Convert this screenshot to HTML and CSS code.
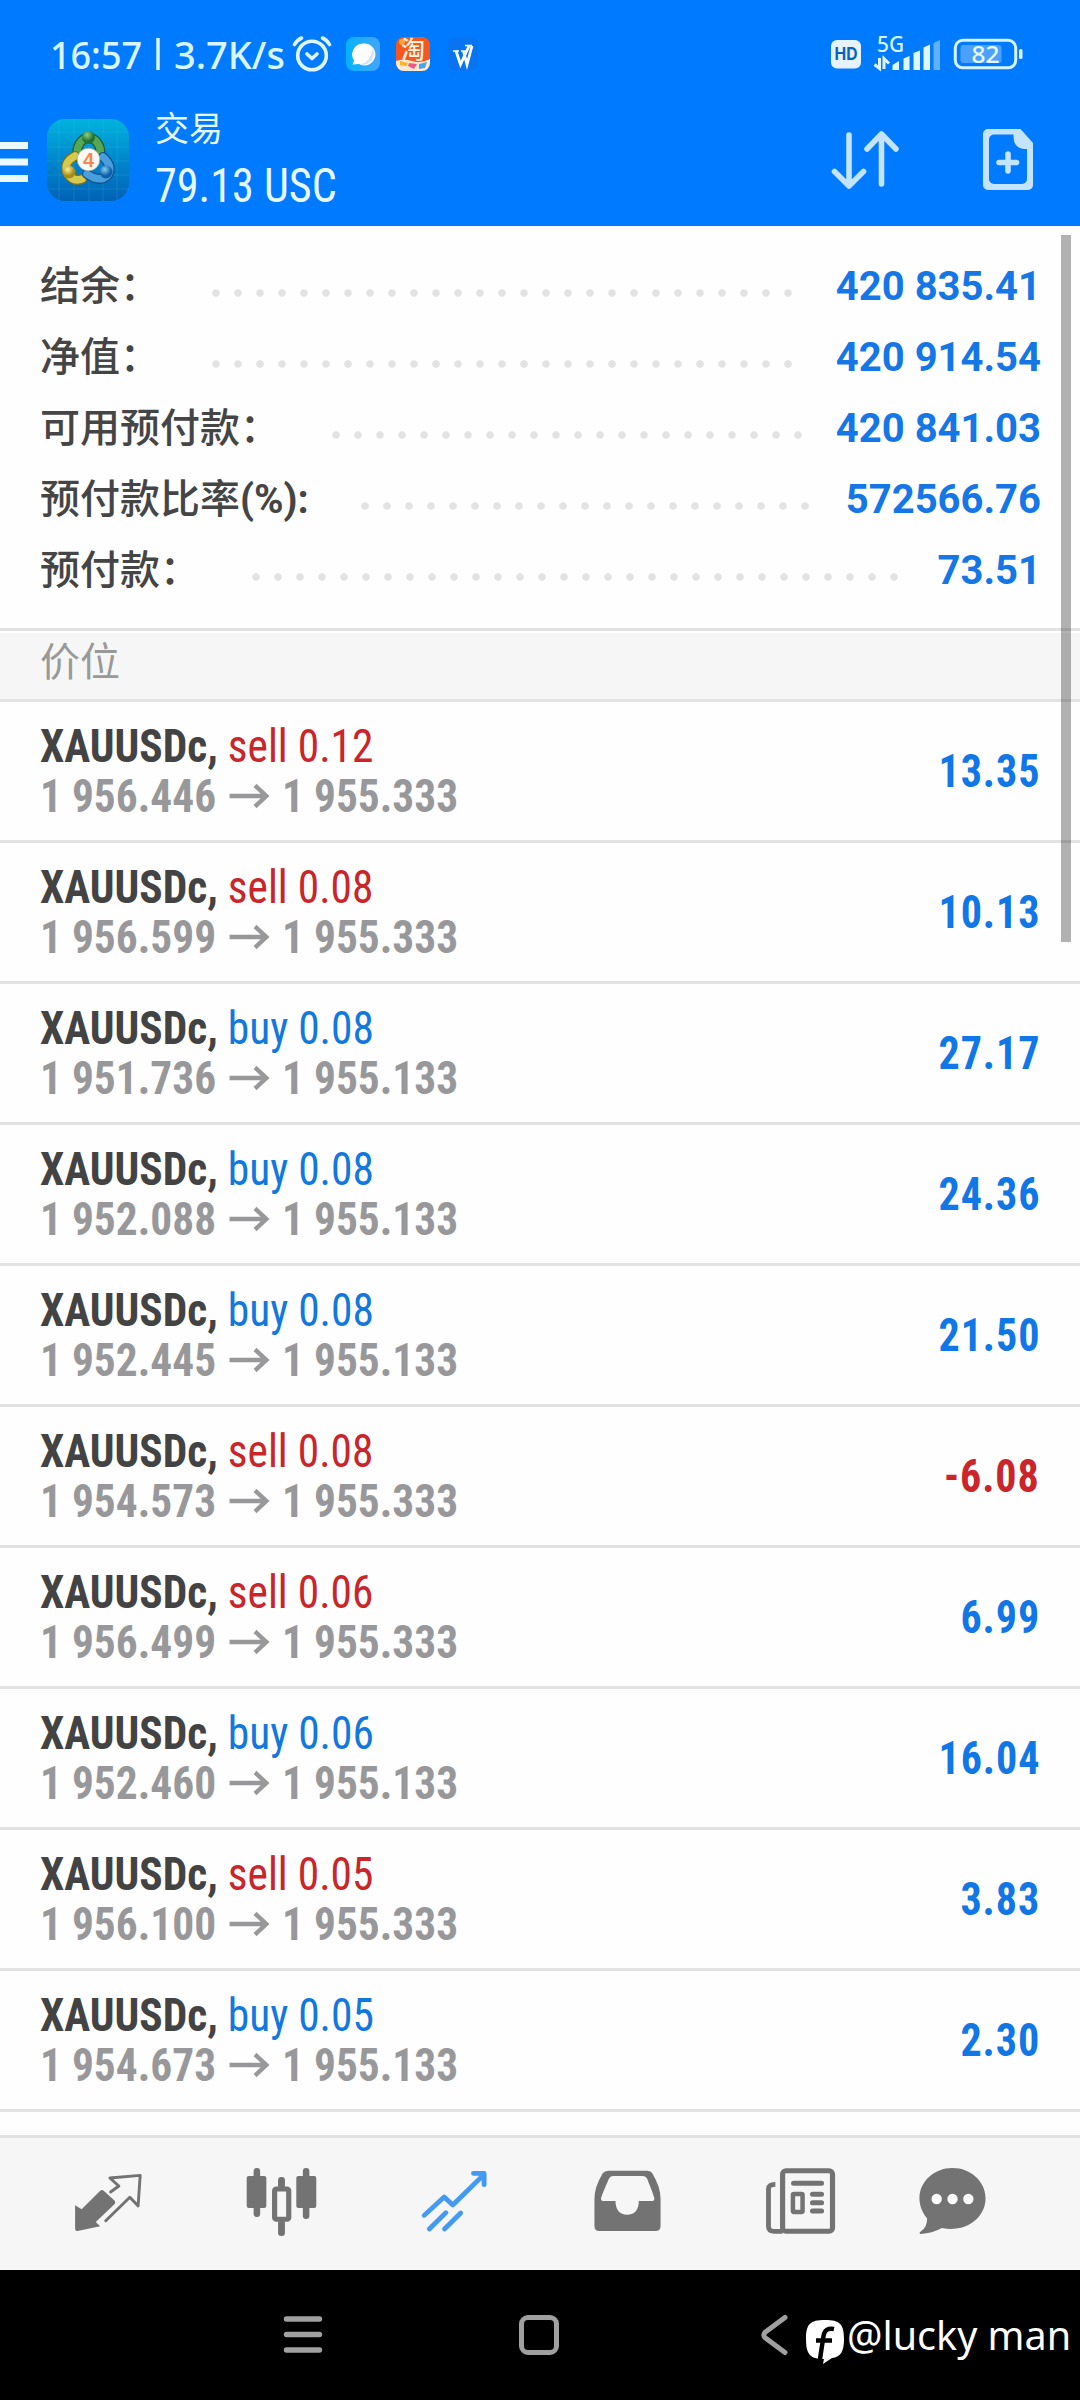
FILE: index.html
```html
<!DOCTYPE html>
<html lang="zh-CN">
<head>
<meta charset="utf-8">
<title>交易</title>
<link rel="stylesheet" href="styles.css">
</head>
<body>
<div class="phone">
  <header class="top">
    <div class="status">
      <svg class="clock" viewBox="50 34 242 40"><text x="50" y="68.500" textLength="92" lengthAdjust="spacingAndGlyphs">16:57</text><path d="M158 38v32" stroke="#d9f5ff" stroke-width="3.500"/><text x="174" y="68.500" textLength="111" lengthAdjust="spacingAndGlyphs">3.7K/s</text></svg>
      <svg class="alarm" viewBox="0 0 40 36"><g fill="none" stroke="#e0f6ff" stroke-width="3.600" stroke-linecap="round" stroke-linejoin="round"><circle cx="20" cy="19.500" r="14.300"/><path d="M2.500 8.500Q5 4 9.500 2M37.500 8.500Q35 4 30.500 2M15 18l5 4.500 5-4.500"/></g></svg>
      <svg class="app app-chat" viewBox="0 0 34 34"><defs><linearGradient id="c" x2="1"><stop stop-color="#03b3f8"/><stop offset="1" stop-color="#43a5ff"/></linearGradient></defs><rect width="34" height="34" rx="8" fill="url(#c)"/><path d="M17 6.500a11 11 0 1 1-4 20.500l-6.500.5 1.500-4A11 11 0 0 1 17 6.500z" fill="#fff"/><path d="M26 11a11 11 0 0 1-12 16.500Q26 24 26 11z" fill="#cfe6fb"/></svg>
      <svg class="app app-shop" viewBox="0 0 34 34"><rect width="34" height="34" rx="8" fill="#f6571f"/><path d="M0 24q8-3 16 0t18-2v4a8 8 0 0 1-8 8H8a8 8 0 0 1-8-8z" fill="#ffe9d0"/><path d="M4 24l8 2-2 3-6-1z" fill="#ffb224"/><path d="M13 26l8 1-3 5-6-3z" fill="#ed5688"/><path d="M23 27l8-2-2 6-6 1z" fill="#46a7ef"/><circle cx="6" cy="5" r="3" fill="#ffa52c"/><text x="17" y="21" text-anchor="middle" class="shop-text">淘</text></svg>
      <svg class="app app-w" viewBox="0 0 34 34"><rect width="30" height="34" rx="7" x="2" fill="#0874f2"/><path d="M7 14h6M15 14h6M19 8.500h7" stroke="#fff" stroke-width="1.500"/><path d="M10 14l4.500 13.500L23 9M17.500 14L21 27.500 26 9" fill="none" stroke="#fff" stroke-width="2.800"/></svg>
      <svg class="system" viewBox="828 34 198 40">
        <rect x="831" y="40" width="30" height="28.500" rx="6" fill="#e6f3ff"/>
        <text x="834.500" y="60" class="hd" textLength="23" lengthAdjust="spacingAndGlyphs">HD</text>
        <text x="877" y="52" class="gen" textLength="27" lengthAdjust="spacingAndGlyphs">5G</text>
        <path d="M879.500 58v10.500l-5-4M884 69V58.500l5 5" fill="none" stroke="#e0f6ff" stroke-width="3"/>
        <path d="M892.500 70v-5l6.500-4v9zM903.500 70V58.500l6-2.500v14zM913.500 70V53l6.500-2.500V70zM923.500 70V47.500l6.500-3V70z" fill="#e0f6ff"/>
        <path d="M933.500 70V43l6.500-3v30z" fill="#62b0ff"/>
        <rect x="955.300" y="40.300" width="60.400" height="27.500" rx="7.500" fill="none" stroke="#d8f3ff" stroke-width="3"/>
        <rect x="960.500" y="45" width="41" height="18" rx="3" fill="#4ba1ff"/>
        <rect x="1019" y="49" width="3.500" height="10" rx="1.500" fill="#d8f3ff"/>
        <text x="971.500" y="63" class="batt" textLength="28" lengthAdjust="spacingAndGlyphs">82</text>
      </svg>
    </div>
    <div class="bar">
      <svg class="burger" viewBox="0 0 28 40"><path d="M0 0h28v7H0zM0 16.500h28v7H0zM0 33h28v7H0z" fill="#eaf9ff"/></svg>
      <svg class="logo" viewBox="0 0 82 82">
        <defs>
          <linearGradient id="bg" x2="0" y2="1"><stop stop-color="#00b4dd"/><stop offset=".5" stop-color="#0087cd"/><stop offset="1" stop-color="#0062b5"/></linearGradient>
          <radialGradient id="gr" cx=".4" cy=".3"><stop stop-color="#8fd07c"/><stop offset="1" stop-color="#1e7233"/></radialGradient>
          <radialGradient id="ye" cx=".4" cy=".3"><stop stop-color="#fff09a"/><stop offset="1" stop-color="#a78c14"/></radialGradient>
          <radialGradient id="bl" cx=".4" cy=".3"><stop stop-color="#86cbf5"/><stop offset="1" stop-color="#0c5fa8"/></radialGradient>
        </defs>
        <rect width="82" height="82" rx="18" fill="url(#bg)"/>
        <path d="M12 0v82M27 0v82M42 0v82M56 0v82M70 0v82M0 13h82M0 28h82M0 42h82M0 56h82M0 70h82" stroke="#48bfe6" stroke-opacity=".2" fill="none"/>
        <g fill="none" stroke-linecap="round">
          <path d="M31 38a11.500 14 0 1 1 22-2" stroke="#1d5b35" stroke-width="10"/><path d="M31 38a11.500 14 0 1 1 22-2" stroke="#55a754" stroke-width="7.500"/>
          <path d="M28 37q-13 7-7 18 5 8 14 5" stroke="#7b701d" stroke-width="10"/><path d="M28 37q-13 7-7 18 5 8 14 5" stroke="#d6ca4d" stroke-width="7.500"/>
          <path d="M56 38q10 9 5 18-8 8-21-1" stroke="#124f8d" stroke-width="10"/><path d="M56 38q10 9 5 18-8 8-21-1" stroke="#489fdd" stroke-width="7.500"/>
        </g>
        <circle cx="41.500" cy="18.500" r="6.500" fill="url(#gr)"/><circle cx="22" cy="53" r="6.500" fill="url(#ye)"/><circle cx="59" cy="53" r="6.500" fill="url(#bl)"/>
        <circle cx="41.500" cy="40.500" r="11.300" fill="#fbf8f3" stroke="#a5a399" stroke-width=".7"/>
        <text x="41.500" y="47.500" text-anchor="middle" class="four">4</text>
      </svg>
      <div class="titles"><div class="title">交易</div><div class="profit">79.13 USC</div></div>
      <svg class="sort" viewBox="0 0 68 60"><path d="M18 5v51M3.500 41.500L18 56l14.500-14.500M50.500 54V4M36 19L50.500 4 65 19" fill="none" stroke="#c3e3ff" stroke-width="5.600" stroke-linecap="round" stroke-linejoin="round"/></svg>
      <svg class="new" viewBox="0 0 50 61"><path fill-rule="evenodd" d="M5 0h32.500L50 14v42a5 5 0 0 1-5 5H5a5 5 0 0 1-5-5V5a5 5 0 0 1 5-5zm6 5.500a5 5 0 0 0-5 5V50a5 5 0 0 0 5 5h28a5 5 0 0 0 5-5V20h-3Q30 19 30.500 5.500z" fill="#c3e3ff"/><path d="M25 25v17M16 33.500h17.500" stroke="#c3e3ff" stroke-width="5.600" stroke-linecap="round"/></svg>
    </div>
  </header>

  <main class="content">
    <section class="summary">
      <div class="sum"><span class="key">结余：</span><span class="lead"><i></i></span><span class="val">420 835.41</span></div>
      <div class="sum"><span class="key">净值：</span><span class="lead"><i></i></span><span class="val">420 914.54</span></div>
      <div class="sum"><span class="key">可用预付款：</span><span class="lead"><i></i></span><span class="val">420 841.03</span></div>
      <div class="sum"><span class="key">预付款比率<b>(%):</b></span><span class="lead"><i></i></span><span class="val">572566.76</span></div>
      <div class="sum"><span class="key">预付款：</span><span class="lead"><i></i></span><span class="val">73.51</span></div>
    </section>
    <h2 class="section">价位</h2>
    <section class="orders">
      <div class="order"><div class="deal"><p><b>XAUUSDc,</b> <span class="sell">sell 0.12</span></p><p class="px">1 956.446<svg class="to" viewBox="0 0 42 24"><path d="M0 12h39M27 1.500L39 12 27 22.500"/></svg>1 955.333</p></div><span class="pl">13.35</span></div>
      <div class="order"><div class="deal"><p><b>XAUUSDc,</b> <span class="sell">sell 0.08</span></p><p class="px">1 956.599<svg class="to" viewBox="0 0 42 24"><path d="M0 12h39M27 1.500L39 12 27 22.500"/></svg>1 955.333</p></div><span class="pl">10.13</span></div>
      <div class="order"><div class="deal"><p><b>XAUUSDc,</b> <span class="buy">buy 0.08</span></p><p class="px">1 951.736<svg class="to" viewBox="0 0 42 24"><path d="M0 12h39M27 1.500L39 12 27 22.500"/></svg>1 955.133</p></div><span class="pl">27.17</span></div>
      <div class="order"><div class="deal"><p><b>XAUUSDc,</b> <span class="buy">buy 0.08</span></p><p class="px">1 952.088<svg class="to" viewBox="0 0 42 24"><path d="M0 12h39M27 1.500L39 12 27 22.500"/></svg>1 955.133</p></div><span class="pl">24.36</span></div>
      <div class="order"><div class="deal"><p><b>XAUUSDc,</b> <span class="buy">buy 0.08</span></p><p class="px">1 952.445<svg class="to" viewBox="0 0 42 24"><path d="M0 12h39M27 1.500L39 12 27 22.500"/></svg>1 955.133</p></div><span class="pl">21.50</span></div>
      <div class="order"><div class="deal"><p><b>XAUUSDc,</b> <span class="sell">sell 0.08</span></p><p class="px">1 954.573<svg class="to" viewBox="0 0 42 24"><path d="M0 12h39M27 1.500L39 12 27 22.500"/></svg>1 955.333</p></div><span class="pl loss">-6.08</span></div>
      <div class="order"><div class="deal"><p><b>XAUUSDc,</b> <span class="sell">sell 0.06</span></p><p class="px">1 956.499<svg class="to" viewBox="0 0 42 24"><path d="M0 12h39M27 1.500L39 12 27 22.500"/></svg>1 955.333</p></div><span class="pl">6.99</span></div>
      <div class="order"><div class="deal"><p><b>XAUUSDc,</b> <span class="buy">buy 0.06</span></p><p class="px">1 952.460<svg class="to" viewBox="0 0 42 24"><path d="M0 12h39M27 1.500L39 12 27 22.500"/></svg>1 955.133</p></div><span class="pl">16.04</span></div>
      <div class="order"><div class="deal"><p><b>XAUUSDc,</b> <span class="sell">sell 0.05</span></p><p class="px">1 956.100<svg class="to" viewBox="0 0 42 24"><path d="M0 12h39M27 1.500L39 12 27 22.500"/></svg>1 955.333</p></div><span class="pl">3.83</span></div>
      <div class="order"><div class="deal"><p><b>XAUUSDc,</b> <span class="buy">buy 0.05</span></p><p class="px">1 954.673<svg class="to" viewBox="0 0 42 24"><path d="M0 12h39M27 1.500L39 12 27 22.500"/></svg>1 955.133</p></div><span class="pl">2.30</span></div>
    </section>
    <div class="scrollbar"></div>
  </main>

  <nav class="tabs">
    <svg viewBox="210 255 212 225" preserveAspectRatio="none"><path d="M219 376l19 12 54-56q5-4 10 0l32 30q3 5 0 10l-55 54 13 13-66 14q-7 1-7-7z" fill="#737373"/><path d="M308 422l70-70 24 26 6-92-88 8 26 24-24 18" fill="none" stroke="#737373" stroke-width="8.500" stroke-linejoin="round" stroke-linecap="round"/></svg>
    <svg viewBox="710 255 212 225" preserveAspectRatio="none"><g fill="#737373"><rect x="715" y="288" width="57" height="96" rx="6"/><rect x="859" y="288" width="58" height="96" rx="6"/><rect x="735" y="264" width="19" height="147" rx="9"/><rect x="878" y="264" width="19" height="153" rx="9"/><rect x="806" y="291" width="20" height="35" rx="9"/><rect x="806" y="420" width="20" height="48" rx="9"/></g><rect x="796" y="327" width="41" height="91" rx="5" fill="none" stroke="#737373" stroke-width="15"/></svg>
    <svg viewBox="1213 255 212 225" preserveAspectRatio="none"><path d="M1231 406l58-55 25 24 91-92M1246 447l48-49M1290 447l47-48M1374 280h31v34" fill="none" stroke="#4499f0" stroke-width="14" stroke-linecap="round" stroke-linejoin="round"/><path d="M1385 282l20 20v-20z" fill="#4499f0"/></svg>
    <svg viewBox="148 255 212 225" preserveAspectRatio="none"><path fill-rule="evenodd" d="M198 272h114q10 0 14 8 24 42 24 76v83q0 14-14 14H172q-14 0-14-14v-83q0-34 24-76 6-8 16-8zM212 288q-9 0-12 8-23 54-23 60 0 7 9 7h33q1 41 34 41t34-41h37q8 0 8-7 0-6-21-60-3-8-12-8z" fill="#737373"/></svg>
    <svg viewBox="652 255 212 225" preserveAspectRatio="none"><g fill="none" stroke="#737373"><path d="M706 454h-26q-15 0-15-15V327q0-14 20-14" stroke-width="14"/><rect x="706" y="272" width="145" height="182" rx="10" stroke-width="15"/><path d="M738 310h81M793 343h26M793 368h26M793 393h26" stroke-width="15" stroke-linecap="round"/><rect x="736" y="342" width="28" height="54" rx="3" stroke-width="13"/></g></svg>
    <svg viewBox="1093 255 212 225" preserveAspectRatio="none"><path d="M1199 264c54 0 96 41 96 91 0 62-62 104-127 89q-28 16-61 18-6-1-2-6 22-14 20-41c-13-16-22-37-22-60 0-50 42-91 96-91z" fill="#737373"/><ellipse cx="1153" cy="357" rx="15" ry="15.500" fill="#fff"/><ellipse cx="1199" cy="357" rx="15" ry="15.500" fill="#fff"/><ellipse cx="1245" cy="357" rx="15" ry="15.500" fill="#fff"/></svg>
  </nav>
  <footer class="sysnav">
    <svg viewBox="0 0 42 42"><path d="M4.500 5h33M4.500 20.500h33M4.500 36h33" stroke="#a0a0a0" stroke-width="5.400" stroke-linecap="round"/></svg>
    <svg viewBox="0 0 42 42"><rect x="3.500" y="3.500" width="35" height="35" rx="6.500" fill="none" stroke="#a0a0a0" stroke-width="5"/></svg>
    <svg viewBox="0 0 42 42"><path d="M31 3.500L11.500 18q-3.500 3 0 6L31 38.500" fill="none" stroke="#a0a0a0" stroke-width="5" stroke-linecap="round"/></svg>
    <div class="mark">
      <svg viewBox="0 0 38 44"><path d="M19 0c15 0 19 4 19 19 0 12-3 18-12 19l-9 6 1-5C4 39 0 34 0 19 0 4 4 0 19 0z" fill="#fff"/><path d="M28 9q-9-2-10.500 7L14 39M10 20.500h16" fill="none" stroke="#000" stroke-width="4.500"/></svg>
      <span>@lucky man</span>
    </div>
  </footer>
</div>
</body>
</html>
```
FILE: styles.css
```css
* { box-sizing: border-box; }
body { margin: 0; background: #000; }
p, h2 { margin: 0; }
svg { display: block; flex: none; overflow: visible; }
.phone { width: 1080px; height: 2400px; display: flex; flex-direction: column; font-family: Roboto, "Noto Sans CJK SC", sans-serif; background: #fefefe; overflow: hidden; }

.top { height: 226px; background: #007aff; flex: none; }
.status { height: 108px; display: flex; align-items: center; padding: 0 54px 0 50px; }
.clock { width: 242px; height: 40px; }
.clock text { font: 500 38.500px "Noto Sans", sans-serif; fill: #d9f5ff; }
.alarm { width: 40px; height: 36px; margin-right: 14px; }
.app { width: 34px; height: 34px; margin-right: 16px; }
.shop-text { font: 500 24px "Noto Sans CJK SC", sans-serif; fill: #fff3dc; }
.system { width: 198px; height: 40px; margin-left: auto; }
.hd { font: 700 17px Inter, sans-serif; fill: #0b62b8; }
.gen { font: 500 21px "Noto Sans", sans-serif; fill: #d9f5ff; }
.batt { font: 500 24px "Noto Sans", sans-serif; fill: #e8f8ff; }

.bar { height: 118px; display: flex; align-items: flex-start; }
.burger { width: 28px; height: 40px; margin: 34px 19px 0 0; }
.logo { width: 82px; height: 82px; margin: 11px 26px 0 0; }
.four { font: 700 20px "Liberation Sans", sans-serif; fill: #f28a4c; }
.titles { color: #e6f9ff; }
.title { font: 400 34px/38px "Noto Sans CJK SC", sans-serif; }
.profit { font-size: 48px; line-height: 56px; font-stretch: 75%; white-space: nowrap; margin-top: 12px; transform: scaleX(.92); transform-origin: 0 0; }
.sort { width: 68px; height: 60px; margin: 22px 84px 0 auto; }
.new { width: 50px; height: 61px; margin: 21px 47px 0 0; }

.content { height: 1909px; position: relative; overflow: hidden; flex: none; }
.summary { height: 402px; padding-top: 24px; }
.sum { height: 71px; display: flex; align-items: center; padding: 0 39px 0 40px; }
.key { margin-bottom: 6px; font: 500 40px/60px "Noto Sans CJK SC", sans-serif; color: #454545; white-space: nowrap; }
.key b { font: 700 40px/0 Roboto, sans-serif; }
.lead { flex: 1; margin: 14px 18px 0 45px; }
.lead i { display: block; height: 8px; width: round(down, 100%, 22px); background: radial-gradient(circle at 11px 4px, #e2e2e2 3.300px, transparent 4.200px) 0 0 / 22px 8px; }
.val { margin-top: 1px; font-size: 40px; font-weight: 700; color: #1577e6; white-space: nowrap; }
.section { height: 74px; border: solid #e2e2e2; border-width: 3px 0; background: #f6f6f6; box-shadow: inset 0 2px #fff; padding-left: 40px; font: 400 40px/56px "Noto Sans CJK SC", sans-serif; color: #999; }
.order { height: 141px; border-bottom: 3px solid #e2e2e2; display: flex; align-items: center; justify-content: space-between; padding: 0 40px; font-size: 46px; font-stretch: 75%; line-height: 50px; white-space: nowrap; }
.deal { transform: scaleX(.943); transform-origin: 0 0; }
.order b { color: #434343; font-weight: 700; }
.sell { color: #c9252b; }
.buy { color: #1178de; }
.px { display: flex; align-items: center; color: #98989b; font-weight: 700; }
.to { width: 44px; height: 24px; margin: 0 13px; fill: none; stroke: #98989b; stroke-width: 4.500; }
.pl { font-weight: 700; color: #1177e6; letter-spacing: 1px; transform: scaleX(.915); transform-origin: 100% 0; }
.loss { color: #c9252b; }
.scrollbar { position: absolute; right: 9px; top: 9px; width: 10px; height: 707px; background: rgba(0, 0, 0, .3); }

.tabs { height: 135px; flex: none; border-top: 3px solid #e2e2e2; background: #f6f6f6; display: flex; padding-left: 72px; gap: 100px; }
.tabs svg { width: 73px; height: 75px; margin-top: 27px; }
.tabs svg:last-child { margin-left: -21px; }

.sysnav { height: 130px; background: #000; position: relative; display: flex; align-items: center; padding-left: 282px; gap: 194px; }
.mark { position: absolute; left: 806px; top: 50px; display: flex; }
.mark svg { width: 38px; height: 44px; margin-right: 3px; }
.mark span { margin-top: -7px; font: 400 39.500px/44px "Noto Sans", sans-serif; color: #fff; white-space: nowrap; }
.sysnav > svg { width: 42px; height: 42px; }
```
